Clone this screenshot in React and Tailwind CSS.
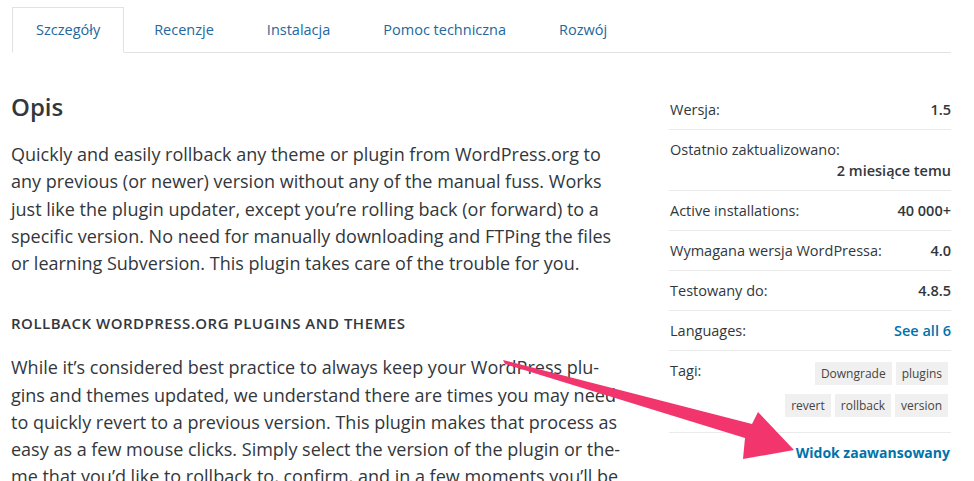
import React from 'react'

const tabs = ['Szczegóły', 'Recenzje', 'Instalacja', 'Pomoc techniczna', 'Rozwój']

const meta = [
  { label: 'Wersja:', value: '1.5' },
  { label: 'Ostatnio zaktualizowano:', value: '2 miesiące temu', stacked: true },
  { label: 'Active installations:', value: '40 000+' },
  { label: 'Wymagana wersja WordPressa:', value: '4.0' },
  { label: 'Testowany do:', value: '4.8.5' },
  { label: 'Languages:', value: 'See all 6', link: true }
]

const tags = ['Downgrade', 'plugins', 'revert', 'rollback', 'version']

function Tabs () {
  return (
    <div className="ml-[12px] mt-[7px] w-[939px] flex border-b border-[#e2e2e2]">
      {tabs.map((tab, i) => (
        <div
          key={tab}
          className={`h-[46px] -mb-px flex items-center px-[23px] mr-[7px] text-[14.5px] text-[#23689c]
            ${i === 0 ? 'border border-[#e2e2e2] border-b-white bg-white' : ''}`}
        >
          {tab}
        </div>
      ))}
    </div>
  )
}

function Sidebar () {
  return (
    <aside className="w-[282px] mr-[23px] ml-auto mt-[37px] text-[14.5px] text-[#32373c]">
      <ul>
        {meta.map(row => (
          <li
            key={row.label}
            className={`py-[9px] leading-[21px] border-b border-[#eaeaea]
              ${row.stacked ? 'block' : 'flex justify-between'}`}
          >
            <span className="pl-[1px]">{row.label}</span>
            <span
              className={`${row.stacked ? 'block text-right' : ''} font-semibold
                ${row.link ? 'text-[#0073aa] font-bold' : ''}`}
            >
              {row.value}
            </span>
          </li>
        ))}
        <li className="pt-[9px] pb-[15px] flex justify-between border-b border-[#eaeaea]">
          <span className="pl-[1px] leading-[21px]">Tagi:</span>
          <div className="w-[168px] mr-[3px] mt-[2px] flex flex-wrap justify-end gap-x-[4px] gap-y-[9px]">
            {tags.map(tag => (
              <span
                key={tag}
                className="h-[23px] px-[6px] flex items-center bg-[#f0f0f0] text-[12px] text-[#444]"
              >
                {tag}
              </span>
            ))}
          </div>
        </li>
        <li className="pt-[9px] pr-[1px] leading-[21px] text-right text-[14px] font-bold text-[#0073aa]">
          Widok zaawansowany
        </li>
      </ul>
    </aside>
  )
}

function Arrow () {
  return (
    <svg
      className="absolute top-0 left-0 pointer-events-none"
      width="974"
      height="481"
      viewBox="0 0 974 481"
    >
      <polygon
        points="503,360 752,424 758,412 794,450 743,459 745,438 505,364"
        fill="#f2356c"
      />
    </svg>
  )
}

export default function App () {
  return (
    <div
      className="relative w-[974px] h-[481px] overflow-hidden bg-white text-[#32373c]"
      style={{ fontFamily: '"Open Sans", "Liberation Sans", sans-serif' }}
    >
      <Tabs />
      <div className="flex">
        <main className="ml-[11px] w-[615px]">
          <h2 className="mt-[38px] text-[24px] leading-[32px] font-semibold">Opis</h2>
          <p className="mt-[18px] text-[18px] leading-[27.25px]">
            Quickly and easily rollback any theme or plugin from WordPress.org to
            any previous (or newer) version without any of the manual fuss. Works
            just like the plugin updater, except you’re rolling back (or forward) to a
            specific version. No need for manually downloading and FTPing the files
            or learning Subversion. This plugin takes care of the trouble for you.
          </p>
          <h3 className="mt-[36px] text-[15px] leading-[20px] font-semibold uppercase tracking-[0.5px]">
            Rollback WordPress.org Plugins and Themes
          </h3>
          <p className="mt-[21px] text-[18px] leading-[27.25px]">
            While it’s considered best practice to always keep your WordPress plu{'\u00AD'}gins
            and themes updated, we understand there are times you may need
            to quickly revert to a previous version. This plugin makes that process as
            easy as a few mouse clicks. Simply select the version of the plugin or the{'\u00AD'}me
            that you’d like to rollback to, confirm, and in a few moments you’ll be
          </p>
        </main>
        <Sidebar />
      </div>
      <Arrow />
    </div>
  )
}
